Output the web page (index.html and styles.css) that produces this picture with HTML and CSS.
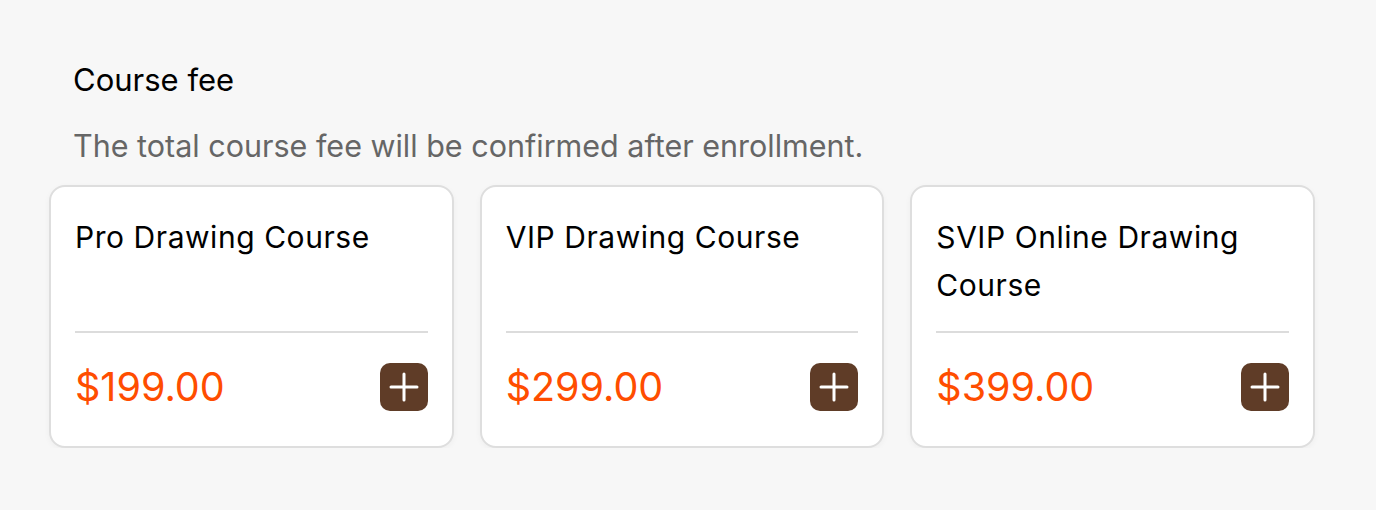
FILE: index.html
```html
<!DOCTYPE html>
<html>
<head>
<meta charset="utf-8">
<link rel="stylesheet" href="styles.css">
</head>
<body>
<section class="fee">
  <h2 class="fee-title">Course fee</h2>
  <p class="fee-note">The total course fee will be confirmed after enrollment.</p>
  <div class="cards">
    <div class="card">
      <div class="card-name">Pro Drawing Course</div>
      <div class="card-foot">
        <span class="price">$199.00</span>
        <button class="add" aria-label="Add"><svg viewBox="0 0 48 48" width="48" height="48"><path d="M24 11v26M11 24h26" stroke="#fff" stroke-width="3" stroke-linecap="round"/></svg></button>
      </div>
    </div>
    <div class="card">
      <div class="card-name">VIP Drawing Course</div>
      <div class="card-foot">
        <span class="price">$299.00</span>
        <button class="add" aria-label="Add"><svg viewBox="0 0 48 48" width="48" height="48"><path d="M24 11v26M11 24h26" stroke="#fff" stroke-width="3" stroke-linecap="round"/></svg></button>
      </div>
    </div>
    <div class="card">
      <div class="card-name">SVIP Online Drawing Course</div>
      <div class="card-foot">
        <span class="price">$399.00</span>
        <button class="add" aria-label="Add"><svg viewBox="0 0 48 48" width="48" height="48"><path d="M24 11v26M11 24h26" stroke="#fff" stroke-width="3" stroke-linecap="round"/></svg></button>
      </div>
    </div>
  </div>
</section>
</body>
</html>
```
FILE: styles.css
```css
html, body {
  margin: 0;
  padding: 0;
  background: #f7f7f7;
}
body {
  font-family: Inter, "Noto Sans", sans-serif;
  color: #000;
}
.fee {
  padding: 58px 61px 0 49px;
}
.fee-title {
  margin: 0 0 0 24px;
  font-size: 31px;
  font-weight: 400;
  line-height: 44px;
}
.fee-note {
  margin: 22px 0 0 24px;
  font-size: 30.5px;
  line-height: 44px;
  color: #666;
}
.cards {
  margin-top: 17px;
  display: grid;
  grid-template-columns: repeat(3, 1fr);
  gap: 26px;
}
.card {
  background: #fff;
  border: 2px solid #dedede;
  border-radius: 16px;
  padding: 26px 24px 35px 24px;
  box-shadow: 0 2px 6px rgba(0,0,0,0.04);
}
.card-name {
  font-size: 30px;
  font-weight: 400;
  letter-spacing: 0.55px;
  line-height: 48px;
  min-height: 96px;
  padding-bottom: 22px;
  border-bottom: 2px solid #dcdcdc;
}
.card-foot {
  display: flex;
  align-items: center;
  justify-content: space-between;
  padding-top: 30px;
}
.price {
  font-size: 39.5px;
  line-height: 48px;
  color: #ff4d00;
}
.add {
  width: 48px;
  height: 48px;
  padding: 0;
  border: 0;
  border-radius: 10px;
  background: #5f3c27;
  display: flex;
  align-items: center;
  justify-content: center;
}
.add svg {
  display: block;
}
```
